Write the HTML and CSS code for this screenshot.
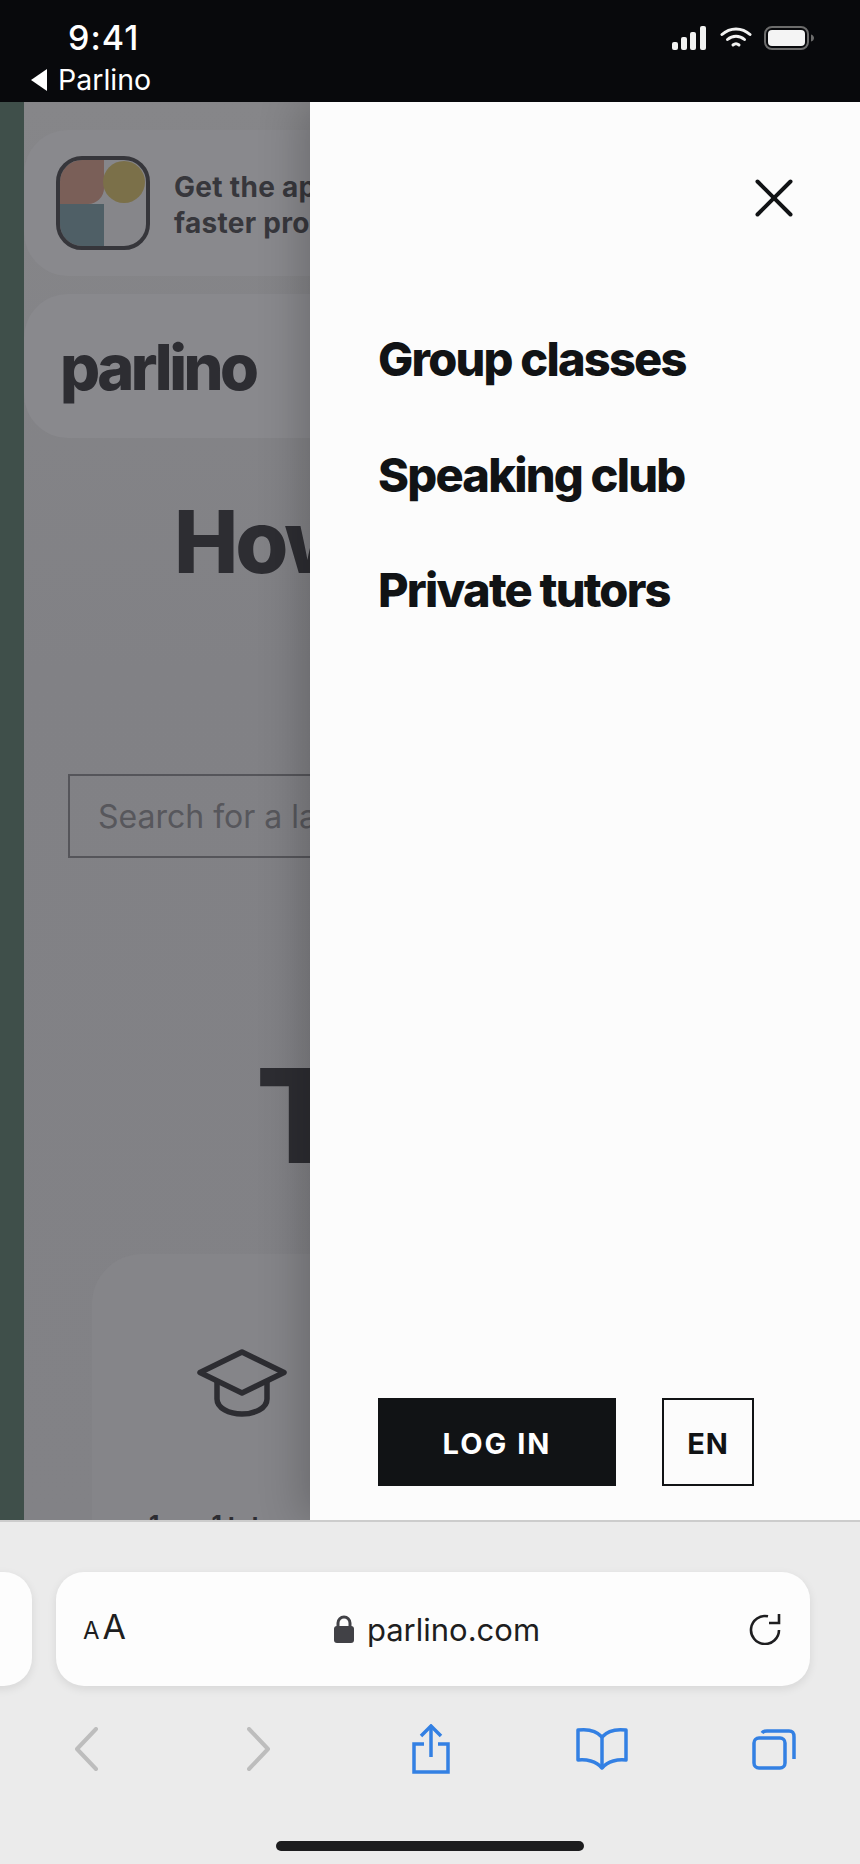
FILE: index.html
```html
<!DOCTYPE html>
<html lang="en">
<head>
  <meta charset="UTF-8">
  <meta name="viewport" content="width=device-width, initial-scale=1">
  <title>Parlino</title>
  <link rel="stylesheet" href="styles.css">
</head>
<body>
  <header class="status-bar">
    <div class="status-left">
      <div class="clock">9:41</div>
      <div class="back-app">
        <svg width="16" height="22" viewBox="0 0 16 22"><path d="M16 0V22L0 11Z" fill="#fff"/></svg>
        <span>Parlino</span>
      </div>
    </div>
    <div class="status-icons">
      <svg class="signal" width="34" height="24" viewBox="0 0 34 24" fill="#f2f2f2">
        <rect x="0" y="16" width="6" height="8" rx="2"/>
        <rect x="9" y="11" width="6" height="13" rx="2"/>
        <rect x="18" y="6" width="6" height="18" rx="2"/>
        <rect x="28" y="0" width="6" height="24" rx="2"/>
      </svg>
      <svg width="32" height="22" viewBox="0 0 32 22" fill="none" stroke="#f2f2f2" stroke-width="3" stroke-linecap="round">
        <path d="M2 7.5C10 0 22 0 30 7.5"/>
        <path d="M7.5 12.5C12.5 8 19.5 8 24.500 12.5"/>
        <path d="M13 18C14.800 16.500 17.200 16.500 19 18"/>
      </svg>
      <svg width="50" height="24" viewBox="0 0 50 24">
        <rect x="1" y="1" width="43" height="22" rx="7" fill="none" stroke="#6c6c6c" stroke-width="2"/>
        <rect x="4" y="4" width="37" height="16" rx="4" fill="#f4f4f4"/>
        <path d="M47 8.500C49 9 50 10.500 50 12C50 13.500 49 15 47 15.500Z" fill="#6c6c6c"/>
      </svg>
    </div>
  </header>

  <div class="stage">
    <div class="strip"></div>

    <div class="page">
      <div class="page-inner">
        <div class="banner">
          <svg class="app-icon" width="94" height="94" viewBox="0 0 94 94">
            <rect x="2" y="2" width="90" height="90" rx="24" fill="#86868a"/>
            <path d="M4 26A22 22 0 0 1 26 4H48V32A16 16 0 0 1 32 48H4Z" fill="#7a5f58"/>
            <circle cx="68" cy="26" r="21" fill="#7b7049"/>
            <path d="M4 48H48V90H26A22 22 0 0 1 4 68Z" fill="#4f5f66"/>
            <rect x="2" y="2" width="90" height="90" rx="24" fill="none" stroke="#36363b" stroke-width="4"/>
          </svg>
          <p class="banner-text">Get the app for<br>faster progress</p>
        </div>

        <div class="logo-card">
          <span class="logo">parlino</span>
        </div>

        <h1 class="page-title">How does it work</h1>

        <div class="search">Search for a language</div>

        <div class="big-title">Tutors</div>

        <div class="lesson-card">
          <svg width="90" height="68" viewBox="0 0 90 68" fill="none" stroke="#2d2d32" stroke-width="5.500" stroke-linejoin="round">
            <path d="M45 3L87 23.500L45 44L3 23.500Z"/>
            <path d="M20 33V50C20 59 32 65 45 65C58 65 70 59 70 50V33"/>
          </svg>
          <div class="lesson-name">1-on-1 tutors</div>
        </div>
      </div>
    </div>

    <aside class="drawer">
      <button class="close-btn" aria-label="Close">
        <svg width="38" height="38" viewBox="0 0 38 38" fill="none" stroke="#111315" stroke-width="4" stroke-linecap="round">
          <path d="M2.500 2.500L35.500 35.500"/>
          <path d="M35.500 2.500L2.500 35.500"/>
        </svg>
      </button>

      <nav class="drawer-menu">
        <a href="#">Group classes</a>
        <a href="#">Speaking club</a>
        <a href="#">Private tutors</a>
      </nav>

      <div class="drawer-actions">
        <button class="login-btn">LOG IN</button>
        <button class="lang-btn">EN</button>
      </div>
    </aside>
  </div>

  <footer class="browser-bar">
    <div class="address-row">
      <div class="pill pill-prev"></div>
      <div class="pill pill-url">
        <span class="text-size"><small>A</small>A</span>
        <span class="url">
          <svg width="20" height="28" viewBox="0 0 20 28">
            <path d="M4 13V8A6 6 0 0 1 16 8V13" fill="none" stroke="#414146" stroke-width="3"/>
            <rect x="0" y="11" width="20" height="17" rx="3" fill="#414146"/>
          </svg>
          parlino.com
        </span>
        <svg class="reload" width="32" height="32" viewBox="0 0 32 32" fill="none" stroke="#1e1e20" stroke-width="2.600">
          <path d="M19 3.300A14 14 0 1 0 30 17"/>
          <path d="M30 1V10H20"/>
        </svg>
      </div>
    </div>

    <div class="toolbar">
      <svg width="24" height="44" viewBox="0 0 24 44" fill="none" stroke="#bdbdbd" stroke-width="4" stroke-linecap="round" stroke-linejoin="round">
        <path d="M22 2L3 22L22 42"/>
      </svg>
      <svg class="forward" width="24" height="44" viewBox="0 0 24 44" fill="none" stroke="#bdbdbd" stroke-width="4" stroke-linecap="round" stroke-linejoin="round">
        <path d="M2 2L21 22L2 42"/>
      </svg>
      <svg class="share" width="38" height="50" viewBox="0 0 38 50" fill="none" stroke="#3380e3" stroke-width="3.500">
        <path d="M19 33V2"/>
        <path d="M9 12L19 2L29 12"/>
        <path d="M12 20H2V48H36V20H26"/>
      </svg>
      <svg width="52" height="44" viewBox="0 0 52 44" fill="none" stroke="#3380e3" stroke-width="3.500" stroke-linejoin="round">
        <path d="M26 10C20 3 10 2 2 3V33C10 32 20 34 26 41C32 34 42 32 50 33V3C42 2 32 3 26 10Z"/>
        <path d="M26 10V41"/>
      </svg>
      <svg width="44" height="41" viewBox="0 0 44 41" fill="none" stroke="#3380e3" stroke-width="3.500">
        <rect x="2" y="9" width="31" height="30" rx="5"/>
        <path d="M10 4C11 2.500 13 2 15 2H37C41 2 42 4 42 8V30"/>
      </svg>
    </div>

    <div class="home-indicator"></div>
  </footer>
</body>
</html>
```

FILE: styles.css
```css
* {
  box-sizing: border-box;
  margin: 0;
  padding: 0;
}

html, body {
  height: 100%;
}

body {
  display: flex;
  flex-direction: column;
  width: 860px;
  height: 1864px;
  overflow: hidden;
  font-family: Inter, 'Noto Sans', sans-serif;
  background: #ebebeb;
}

svg {
  display: block;
  flex-shrink: 0;
}

button {
  font-family: inherit;
  cursor: pointer;
}

/* status bar */
.status-bar {
  display: flex;
  justify-content: space-between;
  align-items: flex-start;
  height: 102px;
  padding: 18px 46px 0 31px;
  background: #08090c;
  color: #fff;
}

.clock {
  margin-left: 37px;
  font-size: 34px;
  font-weight: 500;
  line-height: 40px;
  letter-spacing: 1px;
}

.back-app {
  display: flex;
  align-items: center;
  gap: 11px;
  margin-top: 3px;
  font-size: 28.500px;
  line-height: 38px;
}

.status-icons {
  display: flex;
  align-items: center;
  gap: 12px;
  margin-top: 8px;
}

.signal {
  margin-right: 2px;
}

/* stage */
.stage {
  display: flex;
  height: 1418px;
  overflow: hidden;
}

.strip {
  width: 24px;
  background: #3f4f4a;
}

.page {
  width: 286px;
  overflow: hidden;
  background: linear-gradient(#868689, #818185 40%, #828286);
  color: #2d2d32;
}

.page-inner {
  width: 700px;
  padding-top: 28px;
}

.banner {
  display: flex;
  align-items: center;
  gap: 24px;
  height: 146px;
  padding-left: 32px;
  border-radius: 44px;
  background: #89898d;
}

.banner-text {
  padding-top: 4px;
  font-size: 28px;
  font-weight: 700;
  line-height: 36px;
  letter-spacing: 0.3px;
  color: #37373c;
}

.logo-card {
  display: flex;
  align-items: center;
  height: 144px;
  margin-top: 18px;
  padding-left: 36px;
  border-radius: 44px;
  background: #89898d;
}

.logo {
  padding-top: 2px;
  font-size: 63px;
  font-weight: 800;
  letter-spacing: -3.500px;
  line-height: 62px;
  color: #2d2d32;
}

.page-title {
  margin-top: 56px;
  padding-left: 150px;
  font-size: 86px;
  font-weight: 800;
  letter-spacing: -3px;
  line-height: 96px;
  white-space: nowrap;
}

.search {
  display: flex;
  align-items: center;
  height: 84px;
  margin-top: 184px;
  margin-left: 44px;
  padding-left: 28px;
  border: 2px solid #55555a;
  font-size: 32px;
  color: #57575c;
}

.big-title {
  margin-top: 188px;
  padding-left: 232px;
  font-size: 130px;
  font-weight: 800;
  line-height: 140px;
  letter-spacing: -4px;
}

.lesson-card {
  height: 400px;
  margin-top: 68px;
  margin-left: 68px;
  padding: 95px 0 0 105px;
  border-radius: 50px;
  background: #858589;
}

.lesson-name {
  margin-top: 93px;
  margin-left: -48px;
  font-size: 24px;
  font-weight: 700;
  line-height: 30px;
}

/* drawer */
.drawer {
  position: relative;
  display: flex;
  flex-direction: column;
  width: 550px;
  padding: 0 68px;
  background: #fcfcfc;
  box-shadow: -10px 0 40px rgba(0, 0, 0, 0.2);
}

.close-btn {
  align-self: flex-end;
  width: 38px;
  height: 38px;
  margin-top: 77px;
  margin-right: -1px;
  border: none;
  background: none;
}

.drawer-menu {
  display: flex;
  flex-direction: column;
  gap: 55.500px;
  margin-top: 112px;
}

.drawer-menu a {
  font-size: 47px;
  font-weight: 800;
  line-height: 60px;
  letter-spacing: -1.800px;
  color: #111315;
  text-decoration: none;
}

.drawer-actions {
  display: flex;
  gap: 46px;
  margin-top: auto;
  margin-bottom: 34px;
}

.login-btn {
  width: 238px;
  height: 88px;
  padding-top: 2px;
  border: none;
  background: #111315;
  color: #fff;
  font-size: 29px;
  font-weight: 700;
  letter-spacing: 2px;
}

.lang-btn {
  width: 92px;
  height: 88px;
  padding-top: 2px;
  border: 2px solid #111315;
  background: none;
  color: #111315;
  font-size: 29px;
  font-weight: 700;
  letter-spacing: 1px;
}

/* browser bar */
.browser-bar {
  flex: 1;
  display: flex;
  flex-direction: column;
  border-top: 2px solid #cccccc;
  background: #ebebeb;
}

.address-row {
  display: flex;
  gap: 24px;
  margin-top: 50px;
  margin-left: -60px;
}

.pill {
  height: 114px;
  border-radius: 28px;
  background: #fdfdfd;
  box-shadow: 0 3px 10px rgba(0, 0, 0, 0.09);
}

.pill-prev {
  width: 92px;
}

.pill-url {
  display: grid;
  grid-template-columns: 1fr auto 1fr;
  align-items: center;
  width: 754px;
  padding: 0 29px 0 27px;
}

.text-size {
  font-size: 34px;
  line-height: 40px;
  color: #1e1e20;
}

.text-size small {
  margin-right: 3px;
  font-size: 24px;
}

.url {
  display: flex;
  align-items: center;
  gap: 13px;
  margin-left: 10px;
  font-size: 31px;
  color: #1e1e20;
}

.reload {
  justify-self: end;
}

.toolbar {
  display: grid;
  grid-template-columns: repeat(5, 172px);
  justify-items: center;
  align-items: center;
  height: 50px;
  margin-top: 38px;
}

.forward {
  margin-left: 2px;
}

.share {
  margin-left: 2px;
}

.home-indicator {
  width: 308px;
  height: 10px;
  margin: 67px auto 0;
  border-radius: 5px;
  background: #1c1c1e;
}
```
